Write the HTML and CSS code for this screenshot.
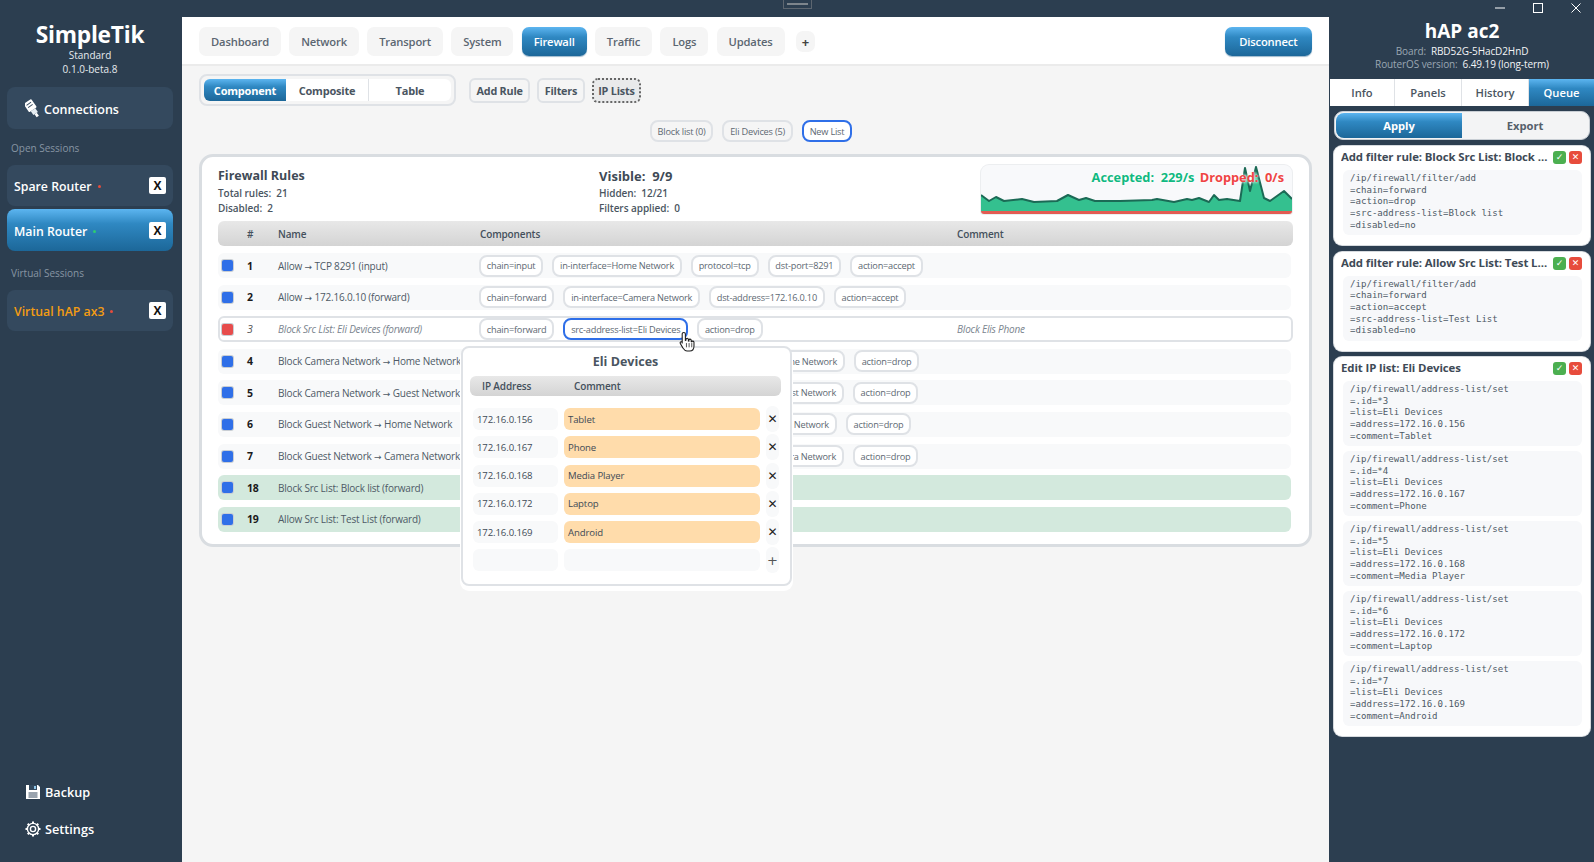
FILE: index.html
```html
<!DOCTYPE html>
<html lang="en">
<head>
<meta charset="utf-8">
<title>SimpleTik</title>
<link rel="stylesheet" href="styles.css">
</head>
<body>
<div class="handle"><span></span></div>
<div class="app">
  <aside class="sidebar">
    <div class="brand">
      <div class="logo">SimpleTik</div>
      <div class="edition">Standard</div>
      <div class="edition">0.1.0-beta.8</div>
    </div>
    <div class="side-btn connections">
      <svg class="side-icon" viewBox="0 0 16 24" width="15" height="22"><g transform="rotate(-35 8 12)"><rect x="3" y="2" width="10" height="11" rx="1" fill="#fff"/><path d="M5 13h6v5H5z" fill="#e6edf2"/><path d="M6.5 18h3v4h-3z" fill="#fff"/><path d="M5 5h6M5 8h6" stroke="#34495e" stroke-width="1"/></g></svg>
      <span>Connections</span>
    </div>
    <div class="side-label">Open Sessions</div>
    <div class="side-btn session"><span class="s-name">Spare Router</span><i class="dot red"></i><b class="close-x">X</b></div>
    <div class="side-btn session active"><span class="s-name">Main Router</span><i class="dot green"></i><b class="close-x">X</b></div>
    <div class="side-label second">Virtual Sessions</div>
    <div class="side-btn session"><span class="s-name orange">Virtual hAP ax3</span><i class="dot red"></i><b class="close-x">X</b></div>
    <div class="side-foot">
      <div class="foot-item">
        <svg viewBox="0 0 16 16" width="16" height="16"><path d="M1 1h12l2 2v12H1z" fill="#fff"/><path d="M4 1h8v5H4z" fill="#34495e"/><path d="M9 2h2v3H9z" fill="#8fc6ea"/><path d="M3.5 9h9M3.5 11h9M3.5 13h9" stroke="#34495e" stroke-width="1"/></svg>
        <span>Backup</span>
      </div>
      <div class="foot-item">
        <svg viewBox="0 0 16 16" width="16" height="16"><circle cx="8" cy="8" r="5.6" fill="none" stroke="#fff" stroke-width="1.4"/><circle cx="8" cy="8" r="2.6" fill="none" stroke="#fff" stroke-width="1.4"/><path d="M8 .5v2.4M8 13.1v2.4M.5 8h2.4M13.1 8h2.4M2.7 2.7l1.7 1.7M11.6 11.6l1.7 1.7M2.7 13.3l1.7-1.7M11.6 4.4l1.7-1.7" stroke="#fff" stroke-width="2"/></svg>
        <span>Settings</span>
      </div>
    </div>
  </aside>

  <main class="main">
    <header class="topnav">
      <a class="nav">Dashboard</a><a class="nav">Network</a><a class="nav">Transport</a><a class="nav">System</a>
      <a class="nav on">Firewall</a><a class="nav">Traffic</a><a class="nav">Logs</a><a class="nav">Updates</a>
      <a class="nav plus">+</a>
      <a class="nav on disconnect">Disconnect</a>
    </header>

    <div class="toolbar">
      <div class="seg">
        <span class="seg-i on">Component</span><span class="seg-i">Composite</span><span class="seg-i">Table</span>
      </div>
      <span class="tool">Add Rule</span><span class="tool">Filters</span><span class="tool dotted">IP Lists</span>
    </div>

    <div class="lists">
      <span class="chip">Block list (0)</span><span class="chip">Eli Devices (5)</span><span class="chip sel">New List</span>
    </div>

    <section class="card">
      <div class="stats">
        <div class="stat-a">
          <div class="stat-title">Firewall Rules</div>
          <div class="stat-line">Total rules:&nbsp; 21</div>
          <div class="stat-line">Disabled:&nbsp; 2</div>
        </div>
        <div class="stat-b">
          <div class="stat-title">Visible:&nbsp; 9/9</div>
          <div class="stat-line">Hidden:&nbsp; 12/21</div>
          <div class="stat-line">Filters applied:&nbsp; 0</div>
        </div>
        <div class="chart">
          <svg viewBox="0 0 311 49" width="311" height="49" preserveAspectRatio="none">
            <path class="area" d="M0 30 8 36 15 32 23 36 41 34 53 37 76 36 87 30 98 35 105 33 114 36 139 36 171 35 176 34 193 37 206 34 211 35 218 33 228 37 233 30 238 35 246 34 259 36 264 3 269 26 275 2 283 33 289 36 303 26 311 34V46H0Z"/>
            <path class="line" d="M0 30 8 36 15 32 23 36 41 34 53 37 76 36 87 30 98 35 105 33 114 36 139 36 171 35 176 34 193 37 206 34 211 35 218 33 228 37 233 30 238 35 246 34 259 36 264 3 269 26 275 2 283 33 289 36 303 26 311 34"/>
            <rect class="drop" x="0" y="46" width="311" height="3"/>
          </svg>
          <div class="chart-label"><span class="acc">Accepted:&nbsp; 229/s</span> <span class="dro">Dropped:&nbsp; 0/s</span></div>
        </div>
      </div>

      <div class="thead">
        <span></span><span class="c">#</span><span>Name</span><span>Components</span><span>Comment</span>
      </div>

      <div class="rows">
        <div class="row">
          <i class="box"></i><b>1</b><span class="name">Allow <span class="arr">→</span> TCP 8291 (input)</span>
          <div class="comps"><span class="chip">chain=input</span><span class="chip">in-interface=Home Network</span><span class="chip">protocol=tcp</span><span class="chip">dst-port=8291</span><span class="chip">action=accept</span></div>
          <span></span>
        </div>
        <div class="row">
          <i class="box"></i><b>2</b><span class="name">Allow <span class="arr">→</span> 172.16.0.10 (forward)</span>
          <div class="comps"><span class="chip">chain=forward</span><span class="chip">in-interface=Camera Network</span><span class="chip">dst-address=172.16.0.10</span><span class="chip">action=accept</span></div>
          <span></span>
        </div>
        <div class="row off">
          <i class="box"></i><b>3</b><span class="name">Block Src List: Eli Devices (forward)</span>
          <div class="comps"><span class="chip">chain=forward</span><span class="chip sel">src-address-list=Eli Devices</span><span class="chip">action=drop</span></div>
          <span class="name">Block Elis Phone</span>
        </div>
        <div class="row">
          <i class="box"></i><b>4</b><span class="name">Block Camera Network <span class="arr">→</span> Home Network</span>
          <div class="comps"><span class="chip">chain=forward</span><span class="chip">in-interface=Camera Network</span><span class="chip">out-interface=Home Network</span><span class="chip">action=drop</span></div>
          <span></span>
        </div>
        <div class="row">
          <i class="box"></i><b>5</b><span class="name">Block Camera Network <span class="arr">→</span> Guest Network</span>
          <div class="comps"><span class="chip">chain=forward</span><span class="chip">in-interface=Camera Network</span><span class="chip">out-interface=Guest Network</span><span class="chip">action=drop</span></div>
          <span></span>
        </div>
        <div class="row">
          <i class="box"></i><b>6</b><span class="name">Block Guest Network <span class="arr">→</span> Home Network</span>
          <div class="comps"><span class="chip">chain=forward</span><span class="chip">in-interface=Guest Network</span><span class="chip">out-interface=Home Network</span><span class="chip">action=drop</span></div>
          <span></span>
        </div>
        <div class="row">
          <i class="box"></i><b>7</b><span class="name">Block Guest Network <span class="arr">→</span> Camera Network</span>
          <div class="comps"><span class="chip">chain=forward</span><span class="chip">in-interface=Guest Network</span><span class="chip">out-interface=Camera Network</span><span class="chip">action=drop</span></div>
          <span></span>
        </div>
        <div class="row new">
          <i class="box"></i><b>18</b><span class="name">Block Src List: Block list (forward)</span>
          <div class="comps"><span class="chip">chain=forward</span><span class="chip">src-address-list=Block list</span></div>
          <span></span>
        </div>
        <div class="row new">
          <i class="box"></i><b>19</b><span class="name">Allow Src List: Test List (forward)</span>
          <div class="comps"><span class="chip">chain=forward</span><span class="chip">src-address-list=Test List</span></div>
          <span></span>
        </div>
      </div>

      <div class="popup">
        <div class="pop-title">Eli Devices</div>
        <div class="pop-head"><span>IP Address</span><span>Comment</span></div>
        <div class="pop-row"><span class="ip">172.16.0.156</span><span class="cm">Tablet</span><span class="del">✕</span></div>
        <div class="pop-row"><span class="ip">172.16.0.167</span><span class="cm">Phone</span><span class="del">✕</span></div>
        <div class="pop-row"><span class="ip">172.16.0.168</span><span class="cm">Media Player</span><span class="del">✕</span></div>
        <div class="pop-row"><span class="ip">172.16.0.172</span><span class="cm">Laptop</span><span class="del">✕</span></div>
        <div class="pop-row"><span class="ip">172.16.0.169</span><span class="cm">Android</span><span class="del">✕</span></div>
        <div class="pop-row"><span class="ip"></span><span class="cm empty"></span><span class="del add">+</span></div>
      </div>

      <svg class="cursor" viewBox="0 0 16 20" width="17" height="22"><path d="M4.5 1c1 0 1.500.7 1.500 1.500v6l.6-.2V7.500c0-1.400 2-1.400 2.200 0v1.600l.5.1V8.200c.2-1.300 2.100-1.200 2.200.1v1.300l.5.2c.3-1 2-.8 2.100.5v3.500c0 2.600-1.500 4.700-4 4.700H7.500C5.500 18.500 4.700 17 3.500 15.300L1.200 11.500c-.7-1.200.9-2.300 1.800-1.200l.0.0 0 1.200V2.500C3 1.600 3.600 1 4.500 1Z" fill="#fff" stroke="#1c1c1c" stroke-width="1"/><path d="M7 11v4M9.500 11v4M12 11v4" stroke="#1c1c1c" stroke-width=".7"/></svg>
    </section>
  </main>

  <aside class="panel">
    <div class="win">
      <svg viewBox="0 0 10 10" width="10" height="10"><path d="M0 5h10" stroke="#fff"/></svg>
      <svg viewBox="0 0 10 10" width="10" height="10"><rect x=".5" y=".5" width="9" height="9" fill="none" stroke="#fff"/></svg>
      <svg viewBox="0 0 10 10" width="10" height="10"><path d="M.5.5l9 9M9.500.5l-9 9" stroke="#fff"/></svg>
    </div>
    <div class="device">hAP ac2</div>
    <div class="dev-line">Board:&nbsp; <em>RBD52G-5HacD2HnD</em></div>
    <div class="dev-line">RouterOS version:&nbsp; <em>6.49.19 (long-term)</em></div>
    <div class="tabs"><span>Info</span><span>Panels</span><span>History</span><span class="on">Queue</span></div>
    <div class="switch"><span class="on">Apply</span><span>Export</span></div>

    <div class="q-card">
      <div class="q-head"><span class="q-title">Add filter rule: Block Src List: Block list (forward)</span><i class="q-ok">✓</i><i class="q-no">✕</i></div>
      <pre class="code">/ip/firewall/filter/add
=chain=forward
=action=drop
=src-address-list=Block list
=disabled=no</pre>
    </div>
    <div class="q-card">
      <div class="q-head"><span class="q-title">Add filter rule: Allow Src List: Test List (forward)</span><i class="q-ok">✓</i><i class="q-no">✕</i></div>
      <pre class="code">/ip/firewall/filter/add
=chain=forward
=action=accept
=src-address-list=Test List
=disabled=no</pre>
    </div>
    <div class="q-card">
      <div class="q-head"><span class="q-title">Edit IP list: Eli Devices</span><i class="q-ok">✓</i><i class="q-no">✕</i></div>
      <pre class="code">/ip/firewall/address-list/set
=.id=*3
=list=Eli Devices
=address=172.16.0.156
=comment=Tablet</pre>
      <pre class="code">/ip/firewall/address-list/set
=.id=*4
=list=Eli Devices
=address=172.16.0.167
=comment=Phone</pre>
      <pre class="code">/ip/firewall/address-list/set
=.id=*5
=list=Eli Devices
=address=172.16.0.168
=comment=Media Player</pre>
      <pre class="code">/ip/firewall/address-list/set
=.id=*6
=list=Eli Devices
=address=172.16.0.172
=comment=Laptop</pre>
      <pre class="code">/ip/firewall/address-list/set
=.id=*7
=list=Eli Devices
=address=172.16.0.169
=comment=Android</pre>
    </div>
  </aside>
</div>
</body>
</html>
```
FILE: styles.css
```css
* { box-sizing: border-box; }
html, body { margin: 0; height: 100%; overflow: hidden; }
body { background: #2c3e50; font-family: "Open Sans", "Noto Sans", sans-serif; color: #4a5561; }

.handle { position: absolute; left: 783px; top: -2px; width: 29px; height: 11px; background: #2c3e50; border: 1px solid #5d6670; display: flex; align-items: center; justify-content: center; }
.handle span { width: 21px; height: 2px; background: #7d858c; }

.app { display: grid; grid-template-columns: 182px 1147px 265px; height: 862px; }

/* sidebar */
.sidebar { display: flex; flex-direction: column; padding: 21px 9px 23px 7px; background: #2c3e50; color: #fff; }
.brand { text-align: center; margin-bottom: 11px; }
.logo { font-size: 22.700px; line-height: 28px; font-weight: 700; letter-spacing: -.2px; }
.edition { font-size: 10px; line-height: 13.500px; color: #e6eaee; }
.side-btn { display: flex; align-items: center; background: #34495e; border-radius: 8px; font-weight: 600; }
.connections { height: 42px; padding: 2px 0 0 18px; font-size: 12.500px; gap: 4px; }
.side-label { font-size: 10px; line-height: 14px; color: #8795a3; margin: 12px 0 10px 4px; }
.side-label.second { margin: 12px 0 10px 4px; }
.session { height: 41px; padding: 2px 7px 0; font-size: 12.300px; margin-bottom: 3px; }
.session.active { height: 42px; background: linear-gradient(180deg, #5cb5f0 0%, #2f88c2 35%, #1c6799 100%); }
.s-name { white-space: nowrap; }
.orange { color: #f39c12; }
.dot { width: 3px; height: 3px; border-radius: 50%; margin-left: 6px; }
.dot.red { background: #e74c3c; }
.dot.green { background: #2ecc71; }
.close-x { margin: -2px 0 0 auto; width: 17px; height: 17px; background: #fff; border-radius: 2px; color: #111; font-size: 12px; line-height: 17px; text-align: center; font-weight: 700; }
.side-foot { margin-top: auto; padding-left: 18px; display: flex; flex-direction: column; gap: 17px; }
.foot-item { display: flex; align-items: center; gap: 4px; height: 20px; font-size: 12.700px; font-weight: 600; }

/* main */
.main { margin-top: 17px; background: #f5f5f5; padding: 0 17px; display: flex; flex-direction: column; min-width: 0; }
.topnav { margin: 0 -17px; padding: 10px 17px 0; height: 49px; background: #fff; border-bottom: 2px solid #ebebeb; display: flex; gap: 8.200px; }
.nav { height: 29px; padding: 0 12px; display: flex; align-items: center; background: #f5f5f5; border-radius: 7px; font-size: 11.200px; letter-spacing: -.15px; font-weight: 600; color: #5b6671; }
.nav.on { color: #fff; background: linear-gradient(180deg, #5cb5f0 0%, #2f88c2 35%, #1c6799 100%); box-shadow: 0 1px 1px #9db8cc; }
.plus { height: 21px; margin: 4px 0 0 3px; padding: 0 6px; font-size: 13px; font-weight: 700; color: #444; }
.nav.disconnect { margin-left: auto; padding: 0 14.500px; }

.toolbar { display: flex; align-items: center; padding-top: 8px; height: 40px; gap: 7px; }
.seg { display: flex; width: 257px; height: 32px; padding: 3px 3px; margin-right: 6px; border: 2px solid #dfe2e6; border-radius: 8px; }
.seg-i { flex: 1; display: flex; align-items: center; justify-content: center; background: #fff; border-right: 1px solid #dfe2e6; font-size: 11px; letter-spacing: -.2px; font-weight: 700; color: #4a5561; }
.seg-i:last-child { border-right: 0; border-radius: 0 6px 6px 0; }
.seg-i.on { color: #fff; border-right: 0; border-radius: 6px 0 0 6px; background: linear-gradient(180deg, #5cb5f0 0%, #2f88c2 35%, #1c6799 100%); }
.tool { height: 25px; padding: 0 5.500px; display: flex; align-items: center; background: #f5f5f5; border: 2px solid #dfe2e6; border-radius: 6px; font-size: 10.800px; letter-spacing: -.2px; font-weight: 700; color: #4a5561; }
.tool.dotted { border: 2px dotted #666; background: #e9eaeb; padding: 0 4.500px; }

.lists { height: 48px; padding: 14px 9px 0 0; display: flex; justify-content: center; gap: 9px; }
.chip { height: 22px; padding: 0 5.800px; display: inline-flex; align-items: center; white-space: nowrap; background: #fff; border: 2px solid #dfe2e6; border-radius: 8px; font-size: 9.200px; letter-spacing: -.2px; color: #5d6872; }
.lists .chip { background: #f5f5f5; }
.lists .chip.sel, .chip.sel { border-color: #2f6fe8; background: #fff; }

.card { position: relative; height: 393px; background: #fff; border: 3px solid #d9dde1; border-radius: 14px; padding: 8px 17px 0 16px; }
.stats { display: flex; height: 49px; margin-bottom: 7px; }
.stat-a { width: 381px; padding-top: 1px; }
.stat-b { flex: 1; padding-top: 1px; }
.stat-title { font-size: 12.500px; line-height: 20px; font-weight: 700; color: #3e4a56; }
.stat-b .stat-title { font-size: 13px; }
.stat-line { font-size: 10px; line-height: 15px; font-weight: 600; letter-spacing: -.05px; color: #4a5561; }
.chart { position: relative; width: 311px; height: 49px; background: #f8f9fb; border-radius: 8px 8px 3px 3px; overflow: hidden; box-shadow: 0 0 0 1px #eceef0; }
.chart svg { display: block; filter: blur(.5px); }
.area { fill: #34c08f; }
.line { fill: none; stroke: #1b6a55; stroke-width: 2; stroke-linejoin: round; }
.drop { fill: #e25b52; }
.chart-label { position: absolute; top: 3px; right: 8px; font-size: 12.800px; line-height: 18px; font-weight: 700; text-shadow: 0 0 3px #fff, 0 0 3px #fff; white-space: nowrap; }
.acc { color: #10b981; }
.dro { color: #ef4444; margin-left: 2px; }

.thead { display: grid; grid-template-columns: 29px 31px 202px 477px 1fr; align-items: center; width: 1075px; height: 25px; background: linear-gradient(180deg, #e8e8e8, #d4d4d4); border-radius: 6px; font-size: 10px; letter-spacing: -.15px; font-weight: 600; color: #44505c; margin-bottom: 7px; }
.rows { display: flex; flex-direction: column; gap: 6.600px; width: 1075px; }
.row { display: grid; grid-template-columns: 25px 31px 202px 477px 1fr; align-items: center; height: 25px; width: 1073px; padding-left: 4px; background: #f8f9fa; border-radius: 6px; font-size: 10px; letter-spacing: -.2px; color: #4e5a66; }
.row b { font-size: 10.500px; color: #1a1a1a; }
.box { width: 11px; height: 11px; background: #2f6fe8; border-radius: 2px; box-shadow: 0 0 0 1px #c9ced4; }
.name { white-space: nowrap; }
.arr { font-family: "DejaVu Sans", sans-serif; font-size: 9px; letter-spacing: 0; }
.comps { display: flex; gap: 9px; margin-left: -1px; }
.row.off { width: 1075px; height: 26px; background: #fff; border: 2px solid #dfe2e6; padding-left: 2px; color: #7a848e; font-style: italic; }
.row.off .chip { font-style: normal; }
.row.off .box { background: #e74c4c; }
.row.off b { font-weight: 400; color: #555; }
.row.new { background: #d3e9dd; }

.popup { position: absolute; left: 259px; top: 189px; width: 331px; height: 240px; background: #fff; border: 2px solid #dfe2e6; border-radius: 8px; padding: 0 9px 0 7px; box-shadow: 0 4px 0 1px #fff; }
.pop-title { height: 28px; line-height: 28px; text-align: center; font-size: 12.500px; font-weight: 700; color: #4a5561; }
.pop-head { display: grid; grid-template-columns: 92px 1fr; align-items: center; height: 20px; padding-left: 12px; background: linear-gradient(180deg, #e8e8e8, #d4d4d4); border-radius: 6px; font-size: 10px; letter-spacing: -.15px; font-weight: 600; color: #44505c; margin-bottom: 10px; }
.pop-row { display: grid; grid-template-columns: 85px 196px 13px; gap: 0 6px; align-items: center; height: 22px; padding-left: 3px; margin-bottom: 6.300px; font-size: 9.600px; letter-spacing: -.12px; color: #3e4a56; }
.ip { display: flex; align-items: center; height: 22px; padding-left: 4px; background: #f8f9fa; border-radius: 6px; }
.cm { display: flex; align-items: center; height: 22px; padding-left: 4px; background: #ffdcab; border-radius: 6px; }
.cm.empty { background: #f8f9fa; }
.del { display: flex; align-items: center; justify-content: center; height: 26px; background: #f8f9fa; border-radius: 6px; font-family: "DejaVu Sans", sans-serif; font-size: 12px; color: #222; }
.del.add { font-size: 13px; color: #555; }

.cursor { position: absolute; left: 477px; top: 174px; }

/* right panel */
.panel { padding: 0 4px 0 5px; color: #fff; min-width: 0; }
.win { height: 17px; display: flex; justify-content: flex-end; align-items: flex-start; gap: 28px; padding: 3px 13px 0 0; margin: 0 -4px 0 0; }
.device { text-align: center; font-size: 19px; line-height: 28px; font-weight: 700; }
.dev-line { text-align: center; font-size: 10px; line-height: 13px; letter-spacing: -.1px; color: #9aa7b3; }
.dev-line em { font-style: normal; color: #f2f4f6; }
.tabs { display: grid; grid-template-columns: 65px 67px 67px 65px; margin: 8px -4px 0 -4px; height: 27px; background: #fff; }
.tabs span { display: flex; align-items: center; justify-content: center; border-right: 1px solid #dfe2e6; font-size: 11.200px; font-weight: 600; color: #4a5561; }
.tabs span.on { color: #fff; border: 0; background: linear-gradient(180deg, #5cb5f0 0%, #2f88c2 35%, #1c6799 100%); }
.switch { display: grid; grid-template-columns: 1fr 1fr; height: 29px; margin: 5px 0 6px; padding: 1px; background: #f3f4f5; border: 1px solid #c8ced4; border-radius: 9px; overflow: hidden; }
.switch span { display: flex; align-items: center; justify-content: center; font-size: 11.200px; font-weight: 700; color: #55606b; }
.switch span.on { color: #fff; border-radius: 8px 0 0 8px; background: linear-gradient(180deg, #5cb5f0 0%, #2f88c2 35%, #1c6799 100%); }
.q-card { background: #fff; border-radius: 8px; padding: 4px 8px 10px 9px; margin-bottom: 6.500px; box-shadow: 0 0 0 1px #d6dade; color: #3e4a56; }
.q-head { display: flex; align-items: flex-start; gap: 3px; height: 19px; margin: 0 0 1px -2px; }
.q-title { flex: 1; min-width: 0; margin-right: 1px; overflow: hidden; white-space: nowrap; text-overflow: ellipsis; font-size: 11.400px; line-height: 14px; letter-spacing: -.1px; font-weight: 700; }
.q-ok, .q-no { flex: none; width: 13px; height: 13px; margin-top: 1px; border-radius: 3px; color: #fff; font-family: "DejaVu Sans", sans-serif; font-size: 9px; line-height: 13px; text-align: center; font-style: normal; font-weight: 700; }
.q-ok { background: #4caf50; }
.q-no { background: #e74c3c; }
.code { margin: 0 0 5px; padding: 3px 7px 4px; height: 65px; background: #f7f8fa; border-radius: 6px; font-family: "DejaVu Sans Mono", monospace; font-size: 9.100px; line-height: 11.700px; color: #4e5a66; }
.code:last-child { margin-bottom: 0; }
```
